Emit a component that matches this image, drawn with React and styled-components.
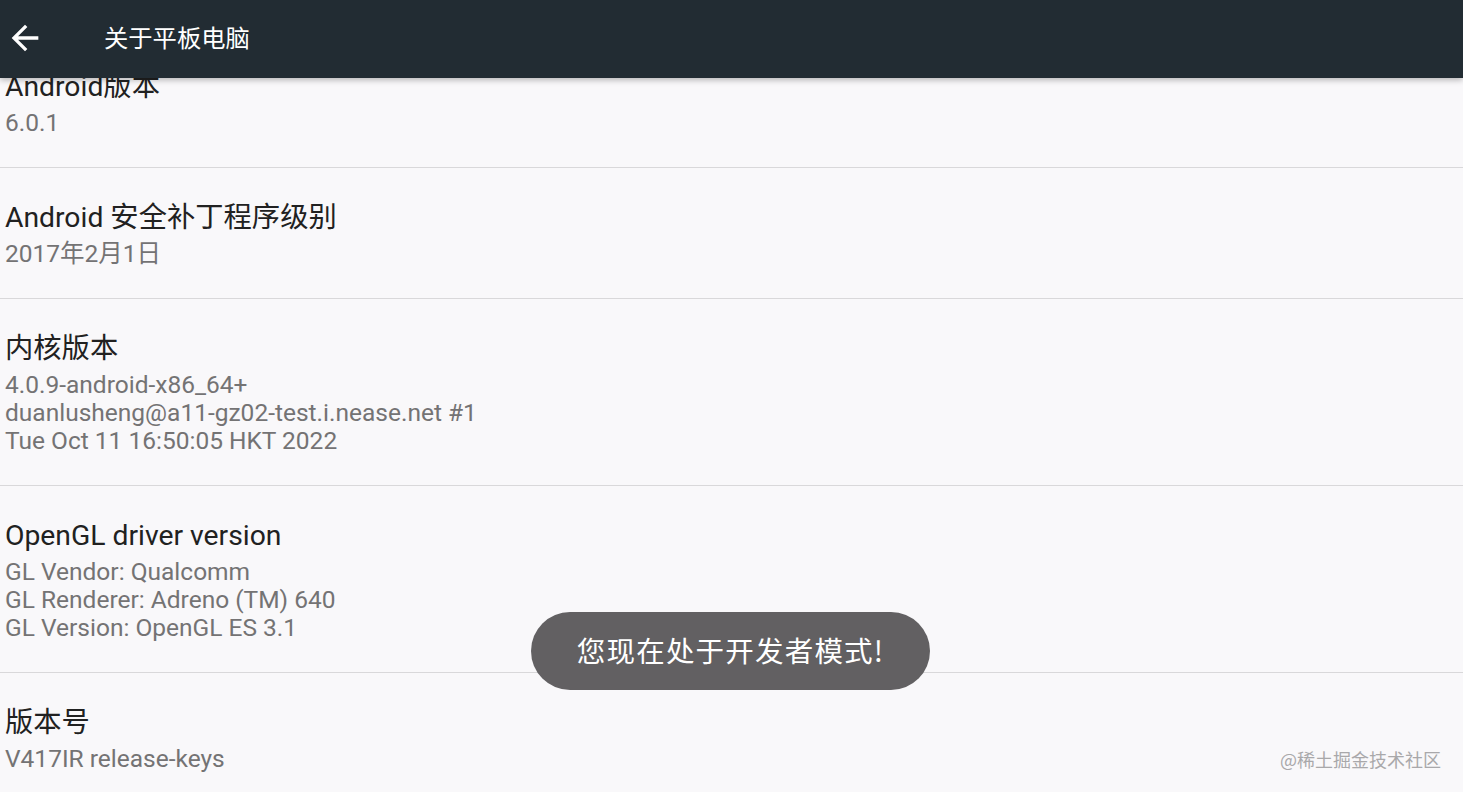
import React from "react";
import styled, { createGlobalStyle } from "styled-components";

const Global = createGlobalStyle`
  html, body { margin: 0; padding: 0; }
  body {
    background: #f9f8fa;
    font-family: Roboto, "Noto Sans CJK SC", sans-serif;
    overflow: hidden;
  }
`;

const Page = styled.div`
  position: relative;
  width: 1463px;
  height: 792px;
  overflow: hidden;
  background: #f9f8fa;
`;

const AppBar = styled.header`
  position: absolute;
  top: 0;
  left: 0;
  right: 0;
  height: 78px;
  padding-bottom: 3px;
  box-sizing: border-box;
  background: #222c33;
  display: flex;
  align-items: center;
  z-index: 2;
  box-shadow: 0 2px 6px rgba(0, 0, 0, 0.28);
`;

const BackButton = styled.button`
  width: 52px;
  height: 60px;
  padding: 0 0 0 5px;
  border: 0;
  background: transparent;
  display: flex;
  align-items: center;
  cursor: pointer;
`;

const BarTitle = styled.h1`
  margin: 0 0 0 52px;
  font-family: "Noto Sans CJK SC", sans-serif;
  font-size: 24.3px;
  font-weight: 400;
  color: #ffffff;
  line-height: 1;
`;

const List = styled.div`
  display: flex;
  flex-direction: column;
  margin-top: 37px;
`;

const Item = styled.div`
  padding: 31px 5px 30px;
  border-bottom: 1px solid #d9d8da;
`;

const Title = styled.div`
  font-size: 28.3px;
  line-height: 38px;
  color: #212121;
`;

const Summary = styled.div`
  margin-top: 3px;
  font-size: 24.5px;
  line-height: 28px;
  color: #747374;
  white-space: pre-line;
`;

const Toast = styled.div`
  position: absolute;
  left: 531px;
  top: 612px;
  width: 399px;
  height: 78px;
  padding-bottom: 3px;
  box-sizing: border-box;
  border-radius: 39px;
  background: #626062;
  color: #ffffff;
  display: flex;
  align-items: center;
  justify-content: center;
  font-family: "Noto Sans CJK SC", sans-serif;
  font-size: 28.5px;
  letter-spacing: 1.2px;
  z-index: 3;
`;

const Watermark = styled.div`
  position: absolute;
  right: 22px;
  top: 747px;
  font-family: "Noto Sans CJK SC", sans-serif;
  font-size: 18px;
  line-height: 24px;
  color: #a9a8aa;
  z-index: 3;
`;

const items = [
  { title: "Android版本", summary: "6.0.1" },
  { title: "Android 安全补丁程序级别", summary: "2017年2月1日" },
  {
    title: "内核版本",
    summary:
      "4.0.9-android-x86_64+\nduanlusheng@a11-gz02-test.i.nease.net #1\nTue Oct 11 16:50:05 HKT 2022",
  },
  {
    title: "OpenGL driver version",
    summary:
      "GL Vendor: Qualcomm\nGL Renderer: Adreno (TM) 640\nGL Version: OpenGL ES 3.1",
  },
  { title: "版本号", summary: "V417IR release-keys" },
];

export default function App() {
  return (
    <Page>
      <Global />
      <AppBar>
        <BackButton aria-label="back">
          <svg width="40" height="40" viewBox="0 0 24 24">
            <path
              d="M20 11H7.83l5.59-5.59L12 4l-8 8 8 8 1.41-1.41L7.83 13H20v-2z"
              fill="#ffffff"
            />
          </svg>
        </BackButton>
        <BarTitle>关于平板电脑</BarTitle>
      </AppBar>
      <List>
        {items.map((it) => (
          <Item key={it.title}>
            <Title>{it.title}</Title>
            <Summary>{it.summary}</Summary>
          </Item>
        ))}
      </List>
      <Toast>您现在处于开发者模式!</Toast>
      <Watermark>@稀土掘金技术社区</Watermark>
    </Page>
  );
}
